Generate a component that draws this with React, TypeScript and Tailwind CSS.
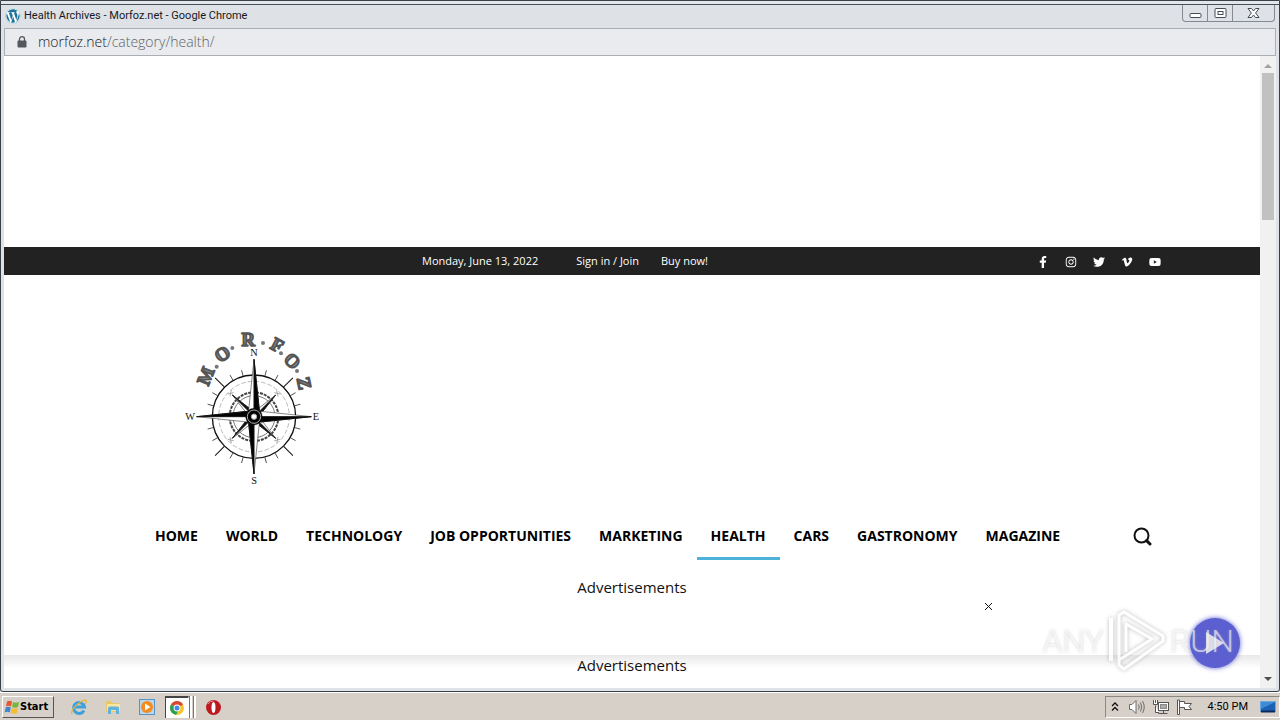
import React from "react";
import {
  FaFacebookF,
  FaInstagram,
  FaTwitter,
  FaVimeoV,
  FaWordpress,
  FaYoutube,
} from "react-icons/fa";

const NAV_ITEMS = [
  "HOME",
  "WORLD",
  "TECHNOLOGY",
  "JOB OPPORTUNITIES",
  "MARKETING",
  "HEALTH",
  "CARS",
  "GASTRONOMY",
  "MAGAZINE",
];

const SOCIALS = [
  { name: "Facebook", Icon: FaFacebookF },
  { name: "Instagram", Icon: FaInstagram },
  { name: "Twitter", Icon: FaTwitter },
  { name: "Vimeo", Icon: FaVimeoV },
  { name: "Youtube", Icon: FaYoutube },
];

const LETTERS = [
  { ch: "M", x: 107, y: 168, r: -68 },
  { ch: "O", x: 157, y: 102, r: -35 },
  { ch: "R", x: 235, y: 58, r: 0 },
  { ch: "F", x: 322, y: 75, r: 28 },
  { ch: "O", x: 367, y: 123, r: 48 },
  { ch: "Z", x: 403, y: 190, r: 78 },
];

const DOTS = [
  [140, 140],
  [187, 84],
  [279, 69],
  [333, 100],
  [381, 153],
];

function CompassLogo() {
  const ticks = Array.from({ length: 24 }, (_, i) => i * 15).filter((a) => a % 90 !== 0);
  return (
    <svg viewBox="0 0 510 510" className="h-[170px] w-[170px]" role="img" aria-label="Morfoz">
      <defs>
        <linearGradient id="metal" x1="0" y1="0" x2="0" y2="1">
          <stop offset="0" stopColor="#3c3c3c" />
          <stop offset="0.5" stopColor="#8d8d8d" />
          <stop offset="1" stopColor="#444" />
        </linearGradient>
      </defs>
      {LETTERS.map((l) => (
        <text
          key={`${l.ch}${l.x}`}
          transform={`translate(${l.x} ${l.y}) rotate(${l.r})`}
          y="19"
          textAnchor="middle"
          fill="url(#metal)"
          stroke="#555"
          strokeWidth="5"
          strokeLinejoin="round"
          className="font-['Liberation_Serif',serif] text-[56px] font-bold"
        >
          {l.ch}
        </text>
      ))}
      {DOTS.map(([x, y]) => (
        <circle key={x} cx={x} cy={y} r="6" fill="#777" />
      ))}
      <g className="font-['Liberation_Serif',serif] text-[31px]" fill="#111" textAnchor="middle">
        <text x="252" y="107">N</text>
        <text x="252" y="492">S</text>
        <text x="60" y="300">W</text>
        <text x="438" y="300">E</text>
      </g>
      <g transform="translate(252 290)" fill="none" stroke="#111">
        <circle r="125" strokeWidth="4" />
        <circle r="106" strokeWidth="2" stroke="#999" strokeDasharray="14 6" />
        <circle r="73" strokeWidth="6" stroke="#444" strokeDasharray="9 3" />
        <circle r="63" strokeWidth="2" stroke="#333" />
        {ticks.map((a) => (
          <line
            key={a}
            y1="-126"
            y2={a % 45 === 0 ? "-165" : "-144"}
            strokeWidth={a % 45 === 0 ? 3 : 2}
            transform={`rotate(${a})`}
          />
        ))}
        {[45, 135, 225, 315].map((a) => (
          <g key={a} transform={`rotate(${a})`}>
            <path d="M0 -92 L9 -18 L-9 -18 Z" fill="#fff" strokeWidth="1.5" />
            <path d="M0 -92 L9 -18 L0 -18 Z" fill="#111" strokeWidth="2" />
            <path d="M-8 -104 L8 -94 M8 -104 L-8 -94" stroke="#888" strokeWidth="2" />
          </g>
        ))}
        {[0, 90, 180, 270].map((a) => (
          <g key={a} transform={`rotate(${a})`}>
            <path d="M0 -172 L16 -20 L-16 -20 Z" fill="#fff" strokeWidth="1.5" />
            <path d="M0 -172 L16 -20 L0 -20 Z" fill="#000" strokeWidth="3" />
          </g>
        ))}
        <circle r="25" fill="#000" strokeWidth="1" />
        <circle r="20" stroke="#fff" strokeWidth="2" />
        <circle r="8" fill="#fff" stroke="#aaa" strokeWidth="3" />
      </g>
    </svg>
  );
}

function TitleBar() {
  return (
    <div className="flex h-[23px] shrink-0 items-start justify-between bg-[#dee1e5]">
      <div className="flex h-[22px] items-center gap-[3px] pl-1">
        <FaWordpress className="h-4 w-4 rounded-full bg-white text-[#21759b]" />
        <span className="font-['Roboto',sans-serif] text-[11px] text-[#17191c]">
          Health Archives - Morfoz.net - Google Chrome
        </span>
      </div>
      <div className="mr-1 flex h-[17px] rounded-b-[4px] border border-t-0 border-[#858a90]">
        <button aria-label="Minimize" className="flex w-[25px] items-center justify-center border-r border-[#858a90]">
          <svg width="13" height="11" viewBox="0 0 13 11">
            <rect x="1" y="5.500" width="11" height="4" rx="1" fill="#fff" stroke="#454b55" />
          </svg>
        </button>
        <button aria-label="Restore" className="flex w-[25px] items-center justify-center border-r border-[#858a90]">
          <svg width="13" height="11" viewBox="0 0 13 11" fill="#fff" stroke="#454b55">
            <rect x="1" y="0.500" width="11" height="9" rx="1" />
            <rect x="4" y="3.500" width="5" height="3" />
          </svg>
        </button>
        <button aria-label="Close" className="flex w-[41px] items-center justify-center">
          <svg width="13" height="11" viewBox="0 0 13 11">
            <path
              d="M1 0.500H4.500L6.500 3L8.500 0.500H12L8.600 5L12 9.500H8.500L6.500 7L4.500 9.500H1L4.400 5Z"
              fill="#fff"
              stroke="#454b55"
            />
          </svg>
        </button>
      </div>
    </div>
  );
}

function AddressBar() {
  return (
    <div className="flex h-7 shrink-0 items-center border border-[#abaeb2] bg-[#e9ebee] pb-px pl-3">
      <svg width="10" height="12" viewBox="0 0 10 12" aria-hidden="true">
        <path d="M2.500 5V3.200a2.500 2.500 0 0 1 5 0V5" fill="none" stroke="#55585c" strokeWidth="1.300" />
        <rect x="0.500" y="4.500" width="9" height="7" rx="1" fill="#55585c" />
      </svg>
      <span className="ml-[11px] font-['Open_Sans',sans-serif] text-[14px] font-light text-[#5f6368]">
        <span className="text-[#202124]">morfoz.net</span>/category/health/
      </span>
    </div>
  );
}

function ScrollBar() {
  return (
    <div className="flex w-4 shrink-0 flex-col items-center justify-between bg-[#f1f1f1] pt-px" aria-hidden="true">
      <div className="flex w-full flex-col items-center">
        <svg width="16" height="16" viewBox="0 0 16 16">
          <path d="M4 11L8 7L12 11Z" fill="#a3a3a3" />
        </svg>
        <div className="h-[147px] w-3 bg-[#c1c1c1]" />
      </div>
      <svg width="16" height="18" viewBox="0 0 16 18">
        <path d="M4 7L8 11L12 7Z" fill="#505050" />
      </svg>
    </div>
  );
}

function TopBar() {
  return (
    <div className="h-7 bg-[#222222] text-white">
      <div className="mx-auto flex h-full max-w-[1060px] items-center pr-px pl-[320px] font-['Open_Sans',sans-serif] text-[11px]">
        <span>Monday, June 13, 2022</span>
        <a href="#signin" className="ml-[38px]">Sign in / Join</a>
        <a href="#buy" className="ml-[22px]">Buy now!</a>
        <div className="ml-auto flex gap-4 pt-px">
          {SOCIALS.map(({ name, Icon }) => (
            <a key={name} href={`#${name}`} aria-label={name} className="flex w-3 justify-center">
              <Icon className="h-3 w-3" />
            </a>
          ))}
        </div>
      </div>
    </div>
  );
}

function Header() {
  return (
    <header className="mx-auto max-w-[1060px]">
      <div className="pt-[45px] pl-[68px]">
        <CompassLogo />
      </div>
      <div className="mt-[22px] flex items-center justify-between">
        <nav className="flex pl-[39px] font-['Open_Sans',sans-serif] text-[14px] font-bold whitespace-nowrap text-black">
          {NAV_ITEMS.map((item) => (
            <a
              key={item}
              href={`#${item}`}
              className={
                item === "HEALTH"
                  ? "flex h-12 items-center border-b-3 border-b-[#4db2d9] px-[14px] pt-px"
                  : "flex h-12 items-center px-[14px] pb-[2px]"
              }
            >
              {item}
            </a>
          ))}
        </nav>
        <button aria-label="Search" className="mr-[10px]">
          <svg width="19" height="19" viewBox="0 0 19 19" fill="none" stroke="#111">
            <circle cx="8.500" cy="8.500" r="7" strokeWidth="2" />
            <path d="M13.600 13.600L17 17" strokeWidth="3" strokeLinecap="round" />
          </svg>
        </button>
      </div>
    </header>
  );
}

function Watermark() {
  return (
    <div className="pointer-events-none absolute right-[26px] bottom-[15px] flex items-center gap-1 font-['Roboto','Liberation_Sans',sans-serif] text-[32px] leading-[64px] font-light text-white/60 [text-shadow:0_0_3px_#aaa8]">
      <span>ANY</span>
      <svg width="58" height="64" viewBox="0 0 58 64" fill="none" className="opacity-80 drop-shadow-[0_0_2px_#aaa]">
        <path d="M3 9V52" stroke="#fff" strokeWidth="4" />
        <path d="M11 51V6L16 3L55 27V32L16 60L11 56V51L44 30L18 15V43" stroke="#fff" strokeWidth="3" strokeLinejoin="round" />
      </svg>
      <span>RUN</span>
    </div>
  );
}

function WebPage() {
  return (
    <main className="relative min-w-0 flex-1 overflow-hidden bg-white">
      <div className="h-[191px]" />
      <TopBar />
      <Header />
      <p className="mt-[15px] text-center font-['Open_Sans',sans-serif] text-[15px] leading-6 text-[#111]">
        Advertisements
      </p>
      <div className="absolute inset-x-0 bottom-0 flex h-[33px] justify-center bg-linear-to-b from-[#e9e9e9] to-white to-40% font-['Open_Sans',sans-serif] text-[15px] leading-5 text-[#111]">
        Advertisements
      </div>
      <button aria-label="Close advertisement" className="absolute right-[267px] bottom-[77px]">
        <svg width="9" height="9" viewBox="0 0 9 9">
          <path d="M1 1L8 8M8 1L1 8" stroke="#111" />
        </svg>
      </button>
      <button
        aria-label="Play"
        className="absolute right-[20px] bottom-[20px] flex h-[50px] w-[50px] items-center justify-center rounded-full bg-[#5b5fd0] shadow-[0_0_5px_#5b5fd0]"
      >
        <svg width="20" height="26" viewBox="0 0 20 26">
          <path d="M1 2L19 13L1 24Z" fill="#e0e0ee" />
        </svg>
      </button>
      <Watermark />
    </main>
  );
}

function WindowsFlag() {
  return (
    <svg width="16" height="16" viewBox="0 0 16 16" aria-hidden="true">
      <path d="M3 2.500Q5.500 1 8 2.500L7 7.500Q4.500 6 2 7.500Z" fill="#e8562a" />
      <path d="M9 3Q11.500 4.500 15 3L14 8Q11 9.300 8 8Z" fill="#75b63b" />
      <path d="M1.700 8.500Q4.200 7 6.800 8.500L5.800 13.500Q3.300 12 0.700 13.500Z" fill="#3f84cf" />
      <path d="M7.800 9Q10.500 10.500 13.800 9L12.800 14Q10 15.300 6.800 14Z" fill="#f3bd2b" />
    </svg>
  );
}

function Taskbar() {
  return (
    <footer className="flex h-7 shrink-0 items-center border-t border-white bg-[#d6d0c8] pt-px pl-[2px]">
      <button className="flex h-[22px] w-[52px] items-center border border-t-white border-r-[#555] border-b-[#555] border-l-white pl-px font-['DejaVu_Sans_Condensed','DejaVu_Sans',sans-serif] text-[11px] font-bold text-black">
        <WindowsFlag />
        <span>Start</span>
      </button>
      <button aria-label="Internet Explorer" className="ml-4">
        <svg width="18" height="18" viewBox="0 0 18 18" fill="none">
          <path d="M14 12.500A5.500 5.500 0 1 1 14.500 9H5" stroke="#3fa0dc" strokeWidth="3" />
          <path d="M2 16C-0.500 12 12 1 16 2.200C17 3 16 5 15 6" stroke="#e3b83c" strokeWidth="1.300" />
        </svg>
      </button>
      <button aria-label="File Explorer" className="ml-4">
        <svg width="18" height="18" viewBox="0 0 18 18">
          <path d="M2 3H7L8 5H15V14H2Z" fill="#e8c764" />
          <path d="M3 6H16V13H3Z" fill="#f8e6a0" />
          <path d="M4 16V10Q4 8.500 6 8.500H13Q15 8.500 15 10V16H12V12H7V16Z" fill="#62b2df" />
        </svg>
      </button>
      <button aria-label="Media Player" className="ml-4">
        <svg width="18" height="18" viewBox="0 0 18 18">
          <rect x="1.500" y="1.500" width="15" height="15" fill="#b9d8ed" stroke="#5794c3" />
          <circle cx="9" cy="9" r="6" fill="#f38b1e" />
          <path d="M7 5.500L12.500 9L7 12.500Z" fill="#fff" />
        </svg>
      </button>
      <button
        aria-label="Chrome"
        className="ml-[9px] flex h-[22px] w-[24px] items-center justify-center border-t-2 border-r border-l border-t-[#444] border-r-white border-l-[#444] bg-white"
      >
        <svg width="16" height="16" viewBox="0 0 16 16">
          <circle cx="8" cy="8" r="7" fill="#f4c52c" />
          <path d="M8 8L1.940 4.500A7 7 0 0 1 14.060 4.500Z" fill="#da4636" />
          <path d="M8 8L1.940 4.500A7 7 0 0 0 7 14.900L10 9Z" fill="#28a05a" />
          <circle cx="8" cy="8" r="3.400" fill="#fff" />
          <circle cx="8" cy="8" r="2.500" fill="#4688e8" />
        </svg>
      </button>
      <div className="flex h-[22px] gap-px" aria-hidden="true">
        <div className="w-[3px] border-r-2 border-white bg-[#77736e]" />
        <div className="w-[3px] border-r-2 border-white bg-[#77736e]" />
      </div>
      <button aria-label="Opera" className="ml-[9px]">
        <svg width="17" height="17" viewBox="0 0 17 17">
          <circle cx="8.500" cy="8.500" r="7.500" fill="#bd1a20" />
          <ellipse cx="8.500" cy="8.500" rx="2" ry="5.500" fill="#fff" />
          <path d="M3 5Q5 2 8.500 2" stroke="#ee8b8b" fill="none" />
        </svg>
      </button>
      <div className="ml-auto flex h-[22px] items-center border border-t-[#8b8781] border-r-white border-b-white border-l-[#8b8781] pr-[3px] pl-[5px]">
        <svg width="8" height="10" viewBox="0 0 8 10" fill="none" stroke="#111" strokeWidth="1.300" aria-hidden="true">
          <path d="M1 4L4 1L7 4M1 8.500L4 5.500L7 8.500" />
        </svg>
        <svg width="18" height="16" viewBox="0 0 18 16" fill="#fff" stroke="#6c6c6c" className="ml-[9px]" aria-hidden="true">
          <path d="M1.500 5.500H4L8 1.500V14.500L4 10.500H1.500Z" />
          <path d="M10.500 5.500Q12 8 10.500 10.500M12.500 3.500Q15 8 12.500 12.500M14.500 2Q18 8 14.500 14" fill="none" />
        </svg>
        <svg width="18" height="16" viewBox="0 0 18 16" fill="#fff" stroke="#555" className="ml-[6px]" aria-hidden="true">
          <rect x="6.500" y="3.500" width="10" height="8" />
          <rect x="8.500" y="5.500" width="6" height="4" fill="#aaa" stroke="#888" />
          <path d="M6.500 14.500H15.500M11.500 12V14M3.500 6.500V13.500H7M1.500 1V5.500H5.500V1M3.500 1V4" />
        </svg>
        <svg width="18" height="16" viewBox="0 0 18 16" fill="#fff" stroke="#555" className="ml-[6px]" aria-hidden="true">
          <path d="M1.500 1V15.500H3.500V1Z" />
          <path d="M3.500 2.500H8.500V4.500H15.500L13 7.500L15.500 10.500H8.500V8.500H3.500Z" />
        </svg>
        <span className="ml-[14px] font-['Roboto',sans-serif] text-[11px] text-black">4:50 PM</span>
        <svg width="16" height="14" viewBox="0 0 16 14" className="ml-3" aria-hidden="true">
          <rect x="0.500" y="1.500" width="15" height="10" fill="#1c62b4" stroke="#6ba8dd" />
          <path d="M1 2H15L1 9Z" fill="#3f8bd6" />
          <path d="M1 11.500H15" stroke="#0c2b58" strokeWidth="2" />
        </svg>
      </div>
    </footer>
  );
}

export default function App() {
  return (
    <div className="flex h-screen flex-col overflow-hidden bg-[#d6d0c8]">
      <div className="flex min-h-0 flex-1 flex-col rounded-b-[3px] border border-[#3a4048] bg-[#dfe2e6]">
        <div className="h-[3px] shrink-0 bg-[#e2e5e9]" />
        <div className="h-px shrink-0 bg-[#4b4f57]" />
        <TitleBar />
        <div className="flex min-h-0 flex-1 flex-col pr-[3px] pb-[3px] pl-[3px]">
          <AddressBar />
          <div className="flex min-h-0 flex-1">
            <WebPage />
            <ScrollBar />
          </div>
        </div>
      </div>
      <Taskbar />
    </div>
  );
}
